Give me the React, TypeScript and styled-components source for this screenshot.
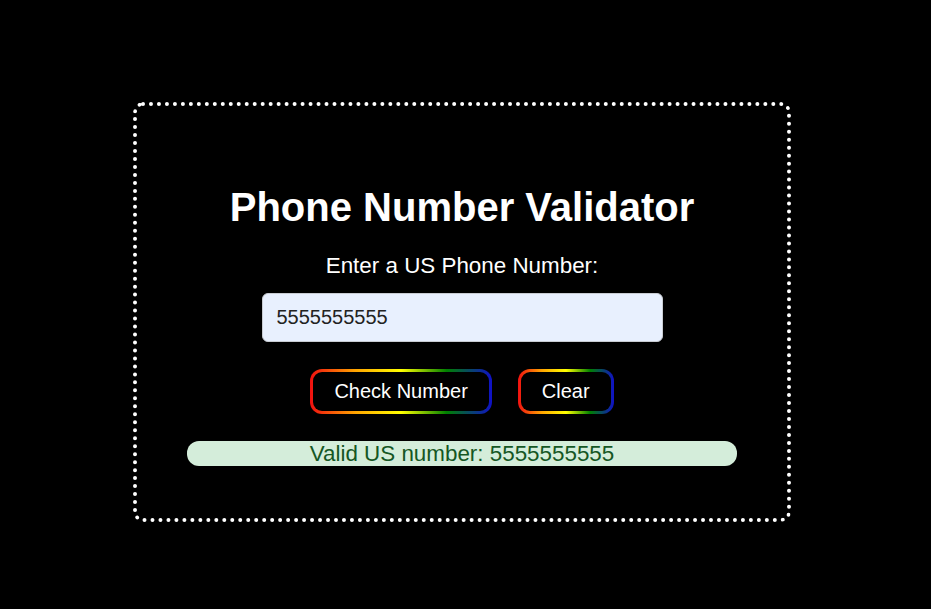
import React, { useState } from 'react';
import styled, { createGlobalStyle } from 'styled-components';

const GlobalStyle = createGlobalStyle`
  html, body {
    margin: 0;
    padding: 0;
    background: #000;
  }

  body {
    font-family: "Liberation Sans", Arial, sans-serif;
    color: #fff;
  }
`;

const Page = styled.div`
  min-height: 609px;
  display: flex;
  justify-content: center;
  align-items: flex-start;
  padding: 102px 7px 0 0;
  box-sizing: border-box;
`;

const Container = styled.main`
  width: 658px;
  box-sizing: border-box;
  border: 4px dotted #fff;
  border-radius: 10px;
  padding: 78px 20px 52px;
  display: flex;
  flex-direction: column;
  align-items: center;
`;

const Title = styled.h1`
  margin: 0;
  font-size: 40px;
  line-height: 46px;
  font-weight: 700;
`;

const Label = styled.label`
  margin-top: 23px;
  font-size: 22.4px;
  line-height: 26px;
`;

const Input = styled.input`
  margin-top: 14px;
  width: 401px;
  height: 49px;
  box-sizing: border-box;
  padding: 0 14px;
  border: 1px solid #c8ccd2;
  border-radius: 6px;
  background: #e8f0fe;
  color: #222;
  font-family: "Liberation Sans", Arial, sans-serif;
  font-size: 20px;
  outline: none;
`;

const ButtonRow = styled.div`
  margin-top: 27px;
  display: flex;
  gap: 26px;
`;

const RainbowButton = styled.button`
  padding: 8px 21px;
  border: 3px solid transparent;
  border-radius: 12px;
  background:
    linear-gradient(#000, #000) padding-box,
    linear-gradient(to right, #f01010, orange, yellow, green, #1010c8) border-box;
  color: #fff;
  font-family: "Liberation Sans", Arial, sans-serif;
  font-size: 20px;
  line-height: 23px;
  cursor: pointer;
`;

const Result = styled.div<{ $valid: boolean }>`
  margin-top: 27px;
  width: 550px;
  height: 25px;
  border-radius: 12px;
  background: ${p => (p.$valid ? '#d4edda' : '#f8d7da')};
  color: ${p => (p.$valid ? '#155724' : '#721c24')};
  font-size: 22.4px;
  line-height: 25px;
  text-align: center;
`;

const App = () => {
  const [value, setValue] = useState('5555555555');
  const [result, setResult] = useState<{ text: string; valid: boolean } | null>({
    text: 'Valid US number: 5555555555',
    valid: true,
  });

  const check = () => {
    const re = /^(1\s?)?(\(\d{3}\)|\d{3})[\s-]?\d{3}[\s-]?\d{4}$/;
    const ok = re.test(value);
    setResult({ text: `${ok ? 'Valid' : 'Invalid'} US number: ${value}`, valid: ok });
  };

  return (
    <>
      <GlobalStyle />
      <Page>
        <Container>
          <Title>Phone Number Validator</Title>
          <Label htmlFor="user-input">Enter a US Phone Number:</Label>
          <Input id="user-input" value={value} onChange={e => setValue(e.target.value)} />
          <ButtonRow>
            <RainbowButton onClick={check}>Check Number</RainbowButton>
            <RainbowButton onClick={() => { setValue(''); setResult(null); }}>Clear</RainbowButton>
          </ButtonRow>
          <Result $valid={result ? result.valid : true}>{result ? result.text : ''}</Result>
        </Container>
      </Page>
    </>
  );
};

export default App;
